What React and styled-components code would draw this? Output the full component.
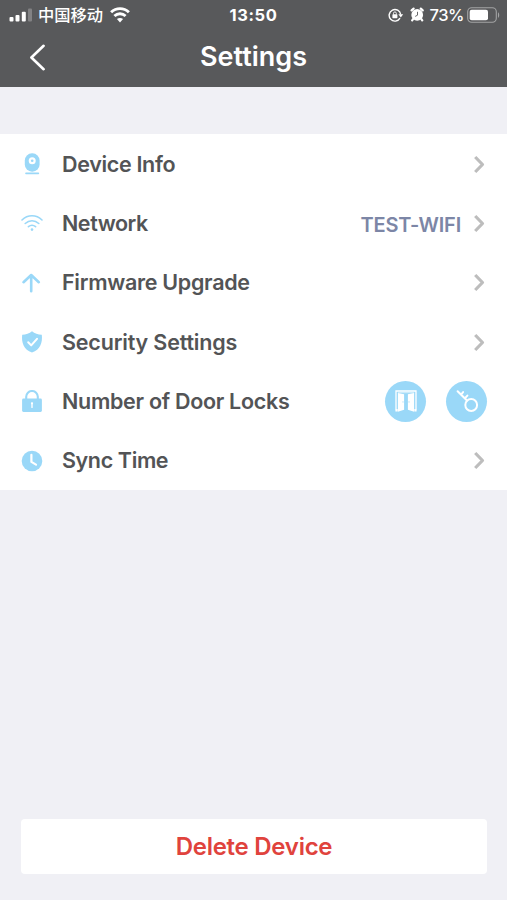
// src/App.jsx
import React from "react";
import styled, { createGlobalStyle } from "styled-components";

const COLORS = {
  header: "#58595B",
  background: "#F0F0F5",
  surface: "#FFFFFF",
  text: "#535456",
  value: "#7C86A6",
  icon: "#9AD8F8",
  chevron: "#BDBDBD",
  danger: "#E0433D",
};

const App = () => {
  return (
    <>
      <GlobalStyle />
      <Screen>
        <Header>
          <StatusBar>
            <StatusLeft>
              <SignalIcon />
              <Carrier>中国移动</Carrier>
              <StatusWifiIcon />
            </StatusLeft>
            <Clock>13:50</Clock>
            <StatusRight>
              <RotationLockIcon />
              <AlarmIcon />
              <Percent>73%</Percent>
              <BatteryIcon />
            </StatusRight>
          </StatusBar>
          <NavBar>
            <BackButton aria-label="Back">
              <svg width="17" height="27" viewBox="0 0 17 27" fill="none">
                <path d="M14.6 1.8 2.4 13.5l12.2 11.7" stroke="#fff" strokeWidth="2.6" strokeLinecap="round" strokeLinejoin="round" />
              </svg>
            </BackButton>
            <Title>Settings</Title>
          </NavBar>
        </Header>

        <List>
          <Row>
            <IconSlot><CameraIcon /></IconSlot>
            <Label $spacing="-0.33px">Device Info</Label>
            <Chevron />
          </Row>
          <Row>
            <IconSlot><NetworkIcon /></IconSlot>
            <Label $spacing="-0.45px">Network</Label>
            <Value>TEST-WIFI</Value>
            <Chevron />
          </Row>
          <Row>
            <IconSlot><ArrowIcon /></IconSlot>
            <Label $spacing="-0.29px">Firmware Upgrade</Label>
            <Chevron />
          </Row>
          <Row>
            <IconSlot><ShieldIcon /></IconSlot>
            <Label $spacing="-0.17px">Security Settings</Label>
            <Chevron />
          </Row>
          <Row>
            <IconSlot><PadlockIcon /></IconSlot>
            <Label $spacing="-0.29px">Number of Door Locks</Label>
            <LockButtons>
              <RoundButton aria-label="Door"><DoorIcon /></RoundButton>
              <RoundButton aria-label="Key"><KeyIcon /></RoundButton>
            </LockButtons>
          </Row>
          <Row>
            <IconSlot><TimeIcon /></IconSlot>
            <Label $spacing="-0.38px">Sync Time</Label>
            <Chevron />
          </Row>
        </List>

        <DeleteButton>Delete Device</DeleteButton>
      </Screen>
    </>
  );
};

export default App;

/* ============= ICONS ============= */

const SignalIcon = () => (
  <svg width="24" height="14" viewBox="0 0 24 14" fill="#fff">
    <rect x="0.5" y="9" width="4" height="4.5" rx="1" />
    <rect x="6.5" y="7" width="4" height="6.5" rx="1" />
    <rect x="12.8" y="3.8" width="4" height="9.7" rx="1" />
    <rect x="19" y="0.5" width="4" height="13" rx="1" opacity="0.25" />
  </svg>
);

const StatusWifiIcon = () => (
  <svg width="20" height="16" viewBox="0 0 20 16" fill="none" stroke="#fff" strokeWidth="2.9">
    <path d="M1.1 5.3C6.2.4 13.8.4 18.9 5.3" />
    <path d="M4.4 9c3.2-3 8-3 11.2 0" />
    <path d="M10 15.4 6.9 12.1c1.8-1.6 4.4-1.6 6.2 0Z" fill="#fff" stroke="none" />
  </svg>
);

const RotationLockIcon = () => (
  <svg width="16" height="14" viewBox="0 0 16 14" fill="none" stroke="#fff">
    <path d="M12 10.2A5.8 5.8 0 1 1 12.7 6.5" strokeWidth="1.4" />
    <path d="m10.4 6.3 4.8 0-2.4 3.3Z" fill="#fff" stroke="none" />
    <rect x="4.4" y="6.3" width="5" height="3.9" rx="0.6" fill="#fff" stroke="none" />
    <path d="M5.5 6.5V5.3a1.4 1.4 0 0 1 2.8 0v1.2" strokeWidth="0.9" />
  </svg>
);

const AlarmIcon = () => (
  <svg width="14" height="15" viewBox="0 0 14 15">
    <path d="M1.6 3.4 3.6 1.6M12.7 3.4 10.8 1.6M3 12.2l-.8 1.2M11.4 12.2l.8 1.2" stroke="#fff" strokeWidth="2.2" strokeLinecap="round" />
    <circle cx="7.2" cy="7.9" r="5.9" fill="#fff" />
    <path d="M7.5 4.8v3.4L5.2 9.4" stroke="#58595B" strokeWidth="0.9" fill="none" />
  </svg>
);

const BatteryIcon = () => (
  <svg width="33" height="16" viewBox="0 0 33 16" fill="none">
    <rect x="0.7" y="0.7" width="28.6" height="14.6" rx="4" stroke="#A3A4A5" strokeWidth="1.1" />
    <rect x="2.7" y="2.8" width="18.3" height="10.4" rx="2" fill="#fff" />
    <path d="M31 5.2c1.6.6 1.6 5 0 5.6Z" fill="#A3A4A5" />
  </svg>
);

const CameraIcon = () => (
  <svg width="22" height="22" viewBox="0 0 22 22" fill={COLORS.icon}>
    <rect x="3.8" y="0.3" width="14.8" height="18.4" rx="7.2" />
    <path d="M5 20.4h12.4" stroke={COLORS.icon} strokeWidth="1.6" strokeLinecap="round" />
    <circle cx="11.2" cy="7.8" r="3.5" fill="#fff" />
    <circle cx="11.2" cy="7.8" r="1.3" />
  </svg>
);

const NetworkIcon = () => (
  <svg width="22" height="22" viewBox="0 0 22 22" fill="none" stroke={COLORS.icon} strokeWidth="1.6" strokeLinecap="round">
    <path d="M1 8C6.7 2.4 15.3 2.4 21 8" />
    <path d="M4.2 11.5c4-3.7 9.6-3.7 13.6 0" />
    <path d="M7.4 14.7c2.2-1.8 5-1.8 7.2 0" />
    <circle cx="11" cy="17.6" r="1.3" fill={COLORS.icon} stroke="none" />
  </svg>
);

const ArrowIcon = () => (
  <svg width="22" height="22" viewBox="0 0 22 22" fill="none" stroke={COLORS.icon} strokeWidth="2.6" strokeLinecap="round" strokeLinejoin="round">
    <path d="M10.2 19.2V3M2.5 10.2 10.2 3l7.6 7.2" />
  </svg>
);

const ShieldIcon = () => (
  <svg width="22" height="22" viewBox="0 0 22 22" fill={COLORS.icon}>
    <path d="M11 .3C8.4 2.8 5 3.5 1.2 3.8.3 11.5 2.7 19 11 21.6 19.3 19 21.7 11.5 20.8 3.8 17 3.5 13.6 2.8 11 .3Z" />
    <path d="m7.2 11.3 3 3.1 5.8-6.6" fill="none" stroke="#fff" strokeWidth="2" strokeLinecap="round" strokeLinejoin="round" />
  </svg>
);

const PadlockIcon = () => (
  <svg width="22" height="22" viewBox="0 0 22 22" fill={COLORS.icon}>
    <rect x="1.1" y="8.6" width="19.8" height="13.3" rx="1.3" />
    <path d="M5.2 9.5V6.8a5.8 5.8 0 0 1 11.6 0v2.7" fill="none" stroke={COLORS.icon} strokeWidth="2.1" />
    <path d="M11 13.2v4.2" stroke="#fff" strokeWidth="1.4" strokeLinecap="round" />
    <circle cx="11" cy="13.3" r="1.1" fill="#fff" />
  </svg>
);

const TimeIcon = () => (
  <svg width="22" height="22" viewBox="0 0 22 22">
    <circle cx="11" cy="11" r="10.3" fill={COLORS.icon} />
    <path d="M10.4 4.8v7.1l4.6 2.7" fill="none" stroke="#fff" strokeWidth="2.2" strokeLinecap="round" strokeLinejoin="round" />
  </svg>
);

const DoorIcon = () => (
  <svg width="24" height="24" viewBox="0 0 24 24">
    <path d="M2 20.5V2h20v18.5" fill="none" stroke="#fff" strokeWidth="1.3" />
    <path d="m3.9 3.9 6.2 1.3v15.6l-6.2 2ZM20.1 3.9l-6.2 1.3v15.6l6.2 2Z" fill="#fff" />
    <path d="M3.9 3.7h16.2" stroke="#fff" strokeWidth="0.6" />
    <path d="M1.4 20v2.4h2.3V20M22.6 20v2.4h-2.3V20" fill="#fff" />
    <path d="M9 12v1.8M15 12v1.8" stroke={COLORS.icon} strokeWidth="0.6" />
  </svg>
);

const KeyIcon = () => (
  <svg width="24" height="24" viewBox="0 0 24 24" fill="none" stroke="#fff" strokeWidth="2" strokeLinecap="round">
    <circle cx="16.2" cy="16" r="5.9" />
    <path d="M12 11.5 2.6 2.2M6.2 5.5l1.9-2.4M9.9 9.3l2.5-2.7" />
  </svg>
);

const Chevron = () => (
  <ChevronSvg width="12" height="19" viewBox="0 0 12 19" fill="none">
    <path d="m2.2 2 7.3 7.5L2.2 17" stroke={COLORS.chevron} strokeWidth="3.2" strokeLinejoin="round" />
  </ChevronSvg>
);

/* ============= STYLES ============= */

const GlobalStyle = createGlobalStyle`
  * {
    box-sizing: border-box;
  }

  body {
    margin: 0;
    background: ${COLORS.background};
    font-family: Inter, "Noto Sans CJK SC", sans-serif;
  }

  button {
    border: 0;
    padding: 0;
    background: none;
    font-family: inherit;
  }

  svg {
    display: block;
    flex-shrink: 0;
  }
`;

const Screen = styled.div`
  height: 900px;
  display: flex;
  flex-direction: column;
  background: ${COLORS.background};
`;

const Header = styled.header`
  height: 87px;
  background: ${COLORS.header};
  color: #fff;
`;

const StatusBar = styled.div`
  height: 29px;
  padding: 0 7px 0 9px;
  display: grid;
  grid-template-columns: 1fr auto 1fr;
  align-items: center;
`;

const StatusLeft = styled.div`
  display: flex;
  align-items: center;
`;

const Carrier = styled.span`
  font-family: "Noto Sans CJK SC", sans-serif;
  font-size: 16.3px;
  font-weight: 500;
  line-height: 26px;
  margin: -2px 7px 0 5px;
`;

const Clock = styled.span`
  margin-right: 2px;
  font-size: 16.5px;
  font-weight: 700;
  letter-spacing: 0.6px;
`;

const StatusRight = styled.div`
  display: flex;
  align-items: center;
  justify-content: flex-end;
  gap: 6px;
`;

const Percent = styled.span`
  font-size: 16.5px;
  font-weight: 500;
  letter-spacing: -0.5px;
  margin-right: -3px;
`;

const NavBar = styled.div`
  height: 56px;
  padding: 0 29px;
  display: grid;
  grid-template-columns: 40px 1fr 40px;
  align-items: center;
`;

const BackButton = styled.button`
  display: flex;
`;

const Title = styled.h1`
  margin: -2px 0 0;
  text-align: center;
  font-size: 27px;
  font-weight: 600;
`;

const List = styled.div`
  margin-top: 47px;
  height: 356px;
  display: grid;
  grid-template-rows: repeat(6, 1fr);
  background: ${COLORS.surface};
`;

const Row = styled.div`
  display: flex;
  align-items: center;
  padding: 1px 20px 0 21px;
`;

const IconSlot = styled.span`
  margin-right: 19px;
`;

const Label = styled.span`
  flex: 1;
  margin-top: -1px;
  font-size: 21.5px;
  font-weight: 600;
  letter-spacing: ${(props) => props.$spacing};
  white-space: nowrap;
  color: ${COLORS.text};
`;

const Value = styled.span`
  margin-right: 12px;
  padding-top: 3px;
  font-size: 20px;
  font-weight: 600;
  letter-spacing: -0.2px;
  color: ${COLORS.value};
`;

const ChevronSvg = styled.svg`
  margin-right: 2px;
`;

const LockButtons = styled.div`
  display: flex;
  gap: 20px;
`;

const RoundButton = styled.button`
  width: 41px;
  height: 41px;
  display: flex;
  align-items: center;
  justify-content: center;
  border-radius: 50%;
  background: ${COLORS.icon};
`;

const DeleteButton = styled.button`
  height: 55px;
  margin: auto 20px 26px 21px;
  border-radius: 4px;
  background: ${COLORS.surface};
  color: ${COLORS.danger};
  font-size: 24px;
  font-weight: 600;
  letter-spacing: -0.27px;
`;
